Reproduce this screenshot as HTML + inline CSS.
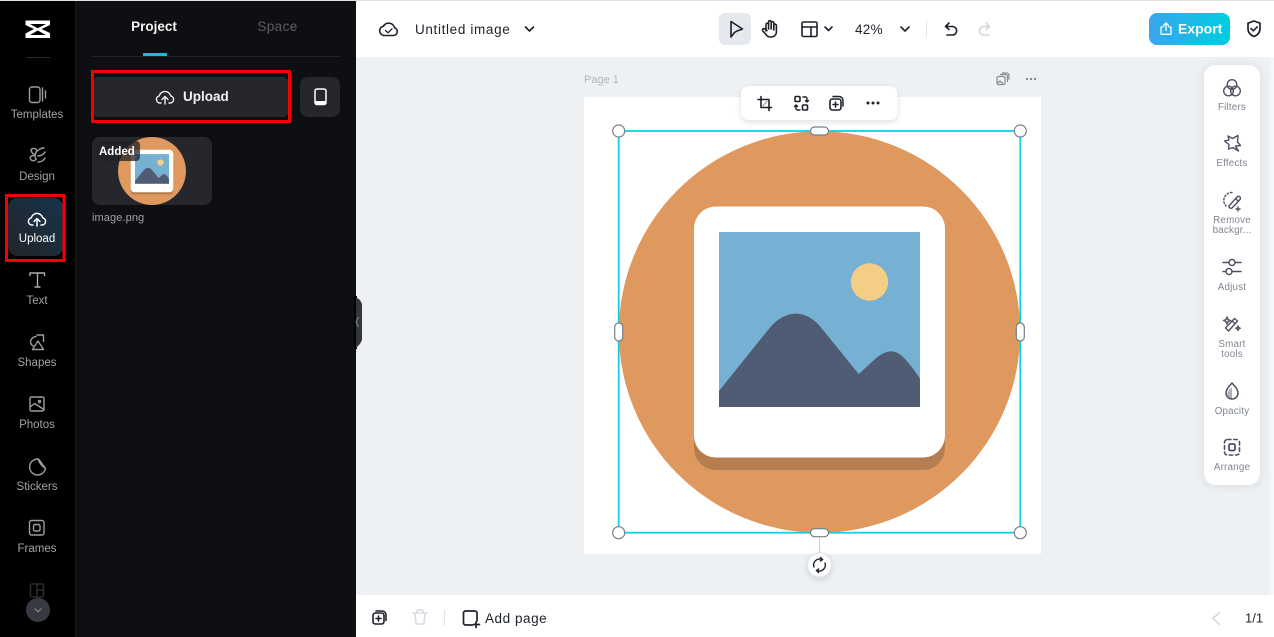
<!DOCTYPE html>
<html><head><meta charset="utf-8"><title>Untitled image</title>
<style>
html,body{margin:0;padding:0;width:1274px;height:637px;overflow:hidden;background:#fff}
svg{display:block}
text{font-family:"Liberation Sans",sans-serif}
.rl{font-size:11.5px;fill:#9fa3a8;text-anchor:middle}
.rp{font-size:9.8px;fill:#7f8590;text-anchor:middle;letter-spacing:.2px}
.ri{fill:none;stroke:#9a9ea3;stroke-width:1.4;stroke-linejoin:round;stroke-linecap:round}
.ti{fill:none;stroke:#1d2129;stroke-width:1.6;stroke-linejoin:round;stroke-linecap:round}
.pi{fill:none;stroke:#4b5160;stroke-width:1.4;stroke-linejoin:round;stroke-linecap:round}
.h{fill:#fff;stroke:#74808c;stroke-width:1.2}
</style></head><body>
<svg width="1274" height="637" viewBox="0 0 1274 637" xmlns="http://www.w3.org/2000/svg">
<defs>
<linearGradient id="ex" x1="0" y1="0" x2="1" y2="0"><stop offset="0" stop-color="#3aa5ef"/><stop offset="1" stop-color="#00cde0"/></linearGradient>
<linearGradient id="up" x1="1" y1="0" x2="0" y2="1"><stop offset="0" stop-color="#16344a"/><stop offset="1" stop-color="#222429"/></linearGradient>
<filter id="sh" x="-20%" y="-30%" width="140%" height="170%"><feDropShadow dx="0" dy="2" stdDeviation="3" flood-color="#1d2129" flood-opacity=".14"/></filter>
<filter id="sh2" x="-40%" y="-10%" width="180%" height="120%"><feDropShadow dx="0" dy="1" stdDeviation="5" flood-color="#1d2129" flood-opacity=".1"/></filter>
<g id="art">
<circle cx="819.5" cy="332" r="200.7" fill="#df985e"/>
<rect x="694" y="219" width="251" height="251" rx="22" fill="#b67d50"/>
<rect x="694" y="206.5" width="251" height="251" rx="22" fill="#fff"/>
<rect x="719" y="232" width="201" height="175" fill="#76b0d3"/>
<circle cx="869.5" cy="282" r="18.7" fill="#f4cd87"/>
<path d="M719 391L770 327.5C786 309 806 309 821 327.5L858.7 374L874 360C886 349 895 349 903 357C909 363 916 372 920 379V407H719Z" fill="#4f5c73"/>
</g>
</defs>

<rect width="1274" height="637" fill="#fff"/>
<rect width="1274" height="1" fill="#dfe1e3"/>

<!-- canvas -->
<rect x="356" y="57" width="918" height="538" fill="#eef1f4"/>
<rect x="1270" y="57" width="4" height="538" fill="#f6f7f8"/>
<rect x="584" y="97" width="457" height="457" fill="#fff"/>
<text x="584" y="83" font-size="11" fill="#b0b7bf">Page 1</text>
<g fill="none" stroke="#858c95" stroke-width="1.2" stroke-linejoin="round">
<rect x="997" y="76.5" width="8" height="8" rx="1.5"/><path d="M1000 74.5h5.5a2 2 0 0 1 2 2v5.5M1002 73h4.5a2.5 2.5 0 0 1 2.5 2.5v4"/><path d="M997.5 83l2.5-2 3 2.5"/>
</g>
<g fill="#858c95"><circle cx="1027" cy="79" r="1.2"/><circle cx="1031" cy="79" r="1.2"/><circle cx="1035" cy="79" r="1.2"/></g>

<use href="#art"/>

<!-- selection -->
<rect x="618.7" y="131" width="401.6" height="401.7" fill="none" stroke="#0fd0e6" stroke-width="1.8"/>
<path d="M819.5 538V555" stroke="#c9ced4" stroke-width="1"/>
<circle class="h" cx="618.7" cy="131" r="6"/><circle class="h" cx="1020.3" cy="131" r="6"/>
<circle class="h" cx="618.7" cy="532.7" r="6"/><circle class="h" cx="1020.3" cy="532.7" r="6"/>
<rect class="h" x="810.5" y="127" width="18" height="8" rx="4"/><rect class="h" x="810.5" y="528.7" width="18" height="8" rx="4"/>
<rect class="h" x="614.7" y="323" width="8" height="18" rx="4"/><rect class="h" x="1016.3" y="323" width="8" height="18" rx="4"/>
<circle cx="819.5" cy="565" r="12" fill="#fff" stroke="#dfe3e7" stroke-width="1" filter="url(#sh)"/>
<g fill="none" stroke="#1d2129" stroke-width="1.4" stroke-linecap="round"><path d="M814 567a6 6 0 0 1 8-7.5M825 563a6 6 0 0 1-8 7.5"/><path d="M820.5 557.5l2 2-2.2 1.5M818.5 572.5l-2-2 2.2-1.5"/></g>

<!-- float toolbar -->
<rect x="741" y="86" width="156.5" height="34" rx="8" fill="#fff" filter="url(#sh)"/>
<g class="ti">
<path d="M761 96.5V107.5H771.5M758 99.5H769V110.5"/>
<path d="M763 105.5l4-4" stroke="#8a9099" stroke-width="1"/>
<rect x="795" y="96.5" width="5" height="5" rx="1"/>
<rect x="802.5" y="105" width="5" height="5" rx="1"/>
<path d="M803 97h2.5a1.500 1.500 0 0 1 1.500 1.500V102M805.500 100.500l1.500 1.500 1.500-1.500M800 110h-2.500a1.500 1.500 0 0 1-1.500-1.500V105M794.500 106.500l1.500-1.500 1.500 1.500" stroke-width="1.400"/>
<rect x="830" y="99" width="11" height="11" rx="2.500"/>
<path d="M833 96.500h6a4 4 0 0 1 4 4v5.500M835.500 102v5M833 104.500h5" stroke-width="1.500"/>
</g>
<g fill="#1d2129"><circle cx="868" cy="103" r="1.500"/><circle cx="873" cy="103" r="1.500"/><circle cx="878" cy="103" r="1.500"/></g>

<!-- right panel -->
<rect x="1204" y="65" width="56" height="420" rx="12" fill="#fff" filter="url(#sh2)"/>
<g class="pi">
<circle cx="1232" cy="84.500" r="4.800"/><circle cx="1228.500" cy="91" r="4.800"/><circle cx="1235.500" cy="91" r="4.800"/>
<path d="M1228 136l4.500 2.500 5.500-3-.5 6.500 3 3.500-5 .5 3 5-5.500-3.500-4.500 1.500.5-4.500-4.500-3.500 4.500-1z"/>
<path d="M1232 192.500a8 8 0 0 0-6 13.500" stroke-dasharray="1.500 2"/>
<path d="M1229 206l8-9a1.800 1.800 0 0 1 3 2.500l-8 8.500a2 2 0 0 1-3-2zM1236 199l2.500 2.500M1236 209h4M1238 207v4"/>
<path d="M1223 262.500h6M1235 262.500h6M1223 271.500h3M1232 271.500h9"/><circle cx="1232" cy="262.500" r="3"/><circle cx="1229" cy="271.500" r="3"/>
<path d="M1225.500 328l9-9.500 3 2.500-9 10zM1232 321l3 2.500M1227 317l1 2.500 2.500 1-2.500 1-1 2.500-1-2.500-2.500-1 2.500-1zM1238 326l.7 1.500 1.500.7-1.500.7-.7 1.500-.7-1.500-1.500-.7 1.500-.7z"/>
<path d="M1232 383c3 3.500 6 6.500 6 10a6 6 0 0 1-12 0c0-3.500 3-6.500 6-10z" stroke-width="1.500"/><path d="M1232 387v12c-3 0-4.500-2.500-4.500-5.500 0-2 2.500-4.500 4.500-6.500z" fill="#4b5160" stroke="none" opacity=".45"/>
<rect x="1224.500" y="439.500" width="15" height="15.500" rx="3" stroke-dasharray="3.500 2.800" stroke-width="1.600"/>
<rect x="1229" y="444" width="6" height="6.500" rx="1.500" stroke-width="1.800"/>
</g>
<text class="rp" x="1232" y="110">Filters</text>
<text class="rp" x="1232" y="166">Effects</text>
<text class="rp" x="1232" y="223">Remove</text>
<text class="rp" x="1232" y="233">backgr...</text>
<text class="rp" x="1232" y="290">Adjust</text>
<text class="rp" x="1232" y="347">Smart</text>
<text class="rp" x="1232" y="357">tools</text>
<text class="rp" x="1232" y="414">Opacity</text>
<text class="rp" x="1232" y="470">Arrange</text>

<!-- top bar -->
<g class="ti">
<path d="M384 35.500h9.500a4 4 0 0 0 1-7.800 6 6 0 0 0-11-1.500 4.700 4.700 0 0 0 .5 9.300z"/>
<path d="M385.500 30.500l2.500 2.300 4-4" stroke-width="1.300"/>
</g>
<text x="415" y="34" font-size="13.500" fill="#1d2129" letter-spacing=".65">Untitled image</text>
<path class="ti" d="M525.500 27l4 4 4-4"/>
<rect x="719" y="13" width="32" height="32" rx="6" fill="#e5e9ee"/>
<path class="ti" d="M731 21.500l11.500 7.500-5.500 2-2.500 1.500-3.500 4.500z"/>
<path class="ti" d="M766 31v-6.500a1.300 1.300 0 0 1 2.600 0V29M768.600 29v-7a1.300 1.300 0 0 1 2.600 0v7M771.200 29v-6a1.300 1.300 0 0 1 2.600 0v7M773.800 30v-4.500a1.300 1.300 0 0 1 2.600 0v7a5 5 0 0 1-5 4.500h-1a5 5 0 0 1-4-2l-3.500-4a1.400 1.400 0 0 1 2-2l2.100 1.500"/>
<rect class="ti" x="802" y="22" width="15" height="14.500" rx="1.500"/><path class="ti" d="M802 27h15M811 27v9.500"/>
<path class="ti" d="M825 27l3.500 3.500 3.500-3.500"/>
<text x="855" y="34" font-size="13.500" fill="#1d2129" letter-spacing=".3">42%</text>
<path class="ti" d="M901 27l4 4 4-4"/>
<rect x="926" y="21" width="1" height="16" fill="#dfe2e6"/>
<path class="ti" d="M949 23l-3.500 3.500 3.500 3M946 26.500h7a4.300 4.300 0 0 1 0 8.500h-6"/>
<path class="ti" style="stroke:#d3d8de" d="M986 23l3.500 3.500-3.500 3M989 26.500h-6a4.300 4.300 0 0 0 0 8.500h6"/>
<rect x="1149" y="13" width="81" height="32" rx="8" fill="url(#ex)"/>
<g fill="none" stroke="#fff" stroke-width="1.300" stroke-linecap="round" stroke-linejoin="round"><path d="M1163 27h-2v6.500a.8.800 0 0 0 .8.800h8.400a.8.800 0 0 0 .8-.8V27h-2"/><path d="M1166 30.500V23.500M1163.500 25.500l2.500-2.500 2.500 2.500"/></g>
<text x="1178" y="33.500" font-size="14" font-weight="700" fill="#fff">Export</text>
<path class="ti" d="M1254 21l6 2.200v5.300c0 3.800-2.300 6.500-6 8-3.700-1.500-6-4.200-6-8v-5.300z" style="stroke-width:1.700"/>
<path class="ti" d="M1251 28.500l2.300 2.300 4-4"/>

<!-- bottom bar -->
<rect x="356" y="595" width="918" height="42" fill="#fff"/>
<g class="ti">
<rect x="373" y="613" width="11" height="11" rx="2.500"/>
<path d="M376 611h6a4 4 0 0 1 4 4v5.500M378.500 616v5M376 618.500h5"/>
</g>
<g class="ti" style="stroke:#d5dae0"><path d="M413 613h14M415 613l1 11h8l1-11M417 613v-1.500a1.500 1.500 0 0 1 1.500-1.500h3a1.500 1.500 0 0 1 1.500 1.500V613"/></g>
<rect x="444" y="610" width="1" height="16" fill="#e0e3e7"/>
<path class="ti" d="M477 621v-8a2 2 0 0 0-2-2h-9.500a2 2 0 0 0-2 2v10a2 2 0 0 0 2 2h7M476 622v5.500M473.500 624.500h6" style="stroke-width:1.700"/>
<text x="485" y="623" font-size="13.500" fill="#1d2129" letter-spacing=".55">Add page</text>
<path d="M1220 612l-7 6.500 7 6.500" fill="none" stroke="#d0d5db" stroke-width="1.400"/>
<text x="1245" y="622.500" font-size="13" fill="#1d2129">1/1</text>

<!-- left rail -->
<rect y="1" width="76" height="636" fill="#000"/>
<rect x="75" y="1" width="1" height="636" fill="#1a1b1e"/>
<path d="M25.500 20.500H50V25L41.500 29L50 33V38H25.500V33.500L34 29L25.500 25Z M30 24L37.700 28.200L46 24Z M30 35H46L37.700 30.500Z" fill="#fff" fill-rule="evenodd"/>
<rect x="26" y="57" width="24" height="1" fill="#2b2c2f"/>
<g class="ri">
<rect x="29.500" y="87" width="10.500" height="15.500" rx="2.500"/><path d="M42.500 88v13M45.500 91v7"/>
<path d="M31 149.500c3-2 6-1 5.500 2l-1 2.500c-2 1-4-1-4.500-4.500zM44 148c-4 0-8 3-9 7M38 156c3 0 6-2 7-4M30 158a3.500 3.500 0 0 1 5-2l1 3.500c-2 2-5 1.500-6-1.500zM38 162c3 0 6-1.500 7-4"/>
<path d="M30 273h14.500M37.500 273v14M35 287h5M30 273v2.500M44.500 273v2.500" style="stroke:#a8abb0"/>
<path d="M36 336.500a6 6 0 0 0-5.500 5c0 2 1 3.500 2.500 4.500M37 335h6.500v6.500M38 341l-5.500 8.500h11z"/>
<rect x="30" y="397" width="14" height="14" rx="1.500"/><path d="M30 407l4.500-3.500 9.500 6"/><circle cx="39.500" cy="401.500" r="1"/>
<path d="M38 459a8 8 0 1 0 7.500 9.500M38 459c1 3 4 7 7.500 9.500M39 459.500l6.500 9"/>
<rect x="29.500" y="520.500" width="14.500" height="14.500" rx="2"/><rect x="33.500" y="524.500" width="6.500" height="6.500" rx="1.500"/>
</g>
<rect x="8" y="198" width="55" height="58" rx="9" fill="url(#up)"/>
<rect x="6.500" y="195.500" width="57.500" height="65" fill="none" stroke="#f40000" stroke-width="3"/>
<g fill="none" stroke="#fff" stroke-width="1.500" stroke-linecap="round" stroke-linejoin="round"><path d="M33 225h-1a3.600 3.600 0 0 1-.8-7.100A6 6 0 0 1 42.800 217.900a3.600 3.600 0 0 1-.8 7.100h-1"/><path d="M37 226v-7M34 221.500l3-3 3 3"/></g>
<text class="rl" x="37" y="118">Templates</text>
<text class="rl" x="37" y="180">Design</text>
<text class="rl" x="37" y="242" style="fill:#fff">Upload</text>
<text class="rl" x="37" y="304">Text</text>
<text class="rl" x="37" y="366">Shapes</text>
<text class="rl" x="37" y="428">Photos</text>
<text class="rl" x="37" y="490">Stickers</text>
<text class="rl" x="37" y="552">Frames</text>
<g fill="none" stroke="#2b2c2f" stroke-width="1.500"><rect x="30.500" y="584" width="13" height="13" rx="1.500"/><path d="M37 584v13M37 590h6.500"/></g>
<circle cx="38" cy="610" r="12" fill="#373a42"/>
<path d="M34.500 608.500l3.500 3.200 3.500-3.200" fill="none" stroke="#80848b" stroke-width="1.200"/>

<!-- panel -->
<rect x="76" y="1" width="280" height="636" fill="#0e0f12"/>
<text x="154" y="31" font-size="13.500" font-weight="700" fill="#f2f2f2" text-anchor="middle">Project</text>
<text x="277.500" y="31" font-size="13.500" fill="#5c5e63" text-anchor="middle" letter-spacing=".4">Space</text>
<rect x="92" y="56" width="248" height="1" fill="#222327"/>
<rect x="143" y="53" width="24" height="3" fill="#00c4d8"/>
<rect x="93" y="77" width="195" height="40" rx="5" fill="#25272c"/>
<rect x="92.500" y="71.500" width="197" height="50" fill="none" stroke="#f40000" stroke-width="3"/>
<g fill="none" stroke="#f2f2f2" stroke-width="1.400" stroke-linecap="round" stroke-linejoin="round"><path d="M161 103h-1a3.600 3.600 0 0 1-.8-7.100A6 6 0 0 1 170.800 95.900a3.600 3.600 0 0 1-.8 7.100h-1"/><path d="M165 104v-7M162 99.500l3-3 3 3"/></g>
<text x="183" y="101" font-size="13.500" font-weight="700" fill="#f2f2f2">Upload</text>
<rect x="300" y="77" width="40" height="40" rx="8" fill="#25272c"/>
<rect x="315" y="89" width="11" height="15.500" rx="2" fill="none" stroke="#fff" stroke-width="1.500"/>
<rect x="315" y="101" width="11" height="3.500" fill="#fff"/>
<rect x="92" y="137" width="120" height="68" rx="8" fill="#25272c"/>
<g transform="translate(152,171) scale(.1693) translate(-819.500,-332)"><use href="#art"/></g>
<rect x="96" y="141" width="44" height="20" rx="4" fill="#202126" fill-opacity=".75"/>
<text x="99" y="155" font-size="11.500" font-weight="700" fill="#fff">Added</text>
<text x="92" y="221" font-size="11" fill="#a0a2a6" letter-spacing=".1">image.png</text>

<!-- collapse handle -->
<rect x="354" y="296" width="3" height="53" fill="#000"/>
<path d="M356 297l4 3 2 4v36l-2 4-4 4z" fill="#33363a"/>
<path d="M358.500 317l-2.500 5 2.500 5" fill="none" stroke="#7c7f84" stroke-width="1.200"/>
</svg>
</body></html>
